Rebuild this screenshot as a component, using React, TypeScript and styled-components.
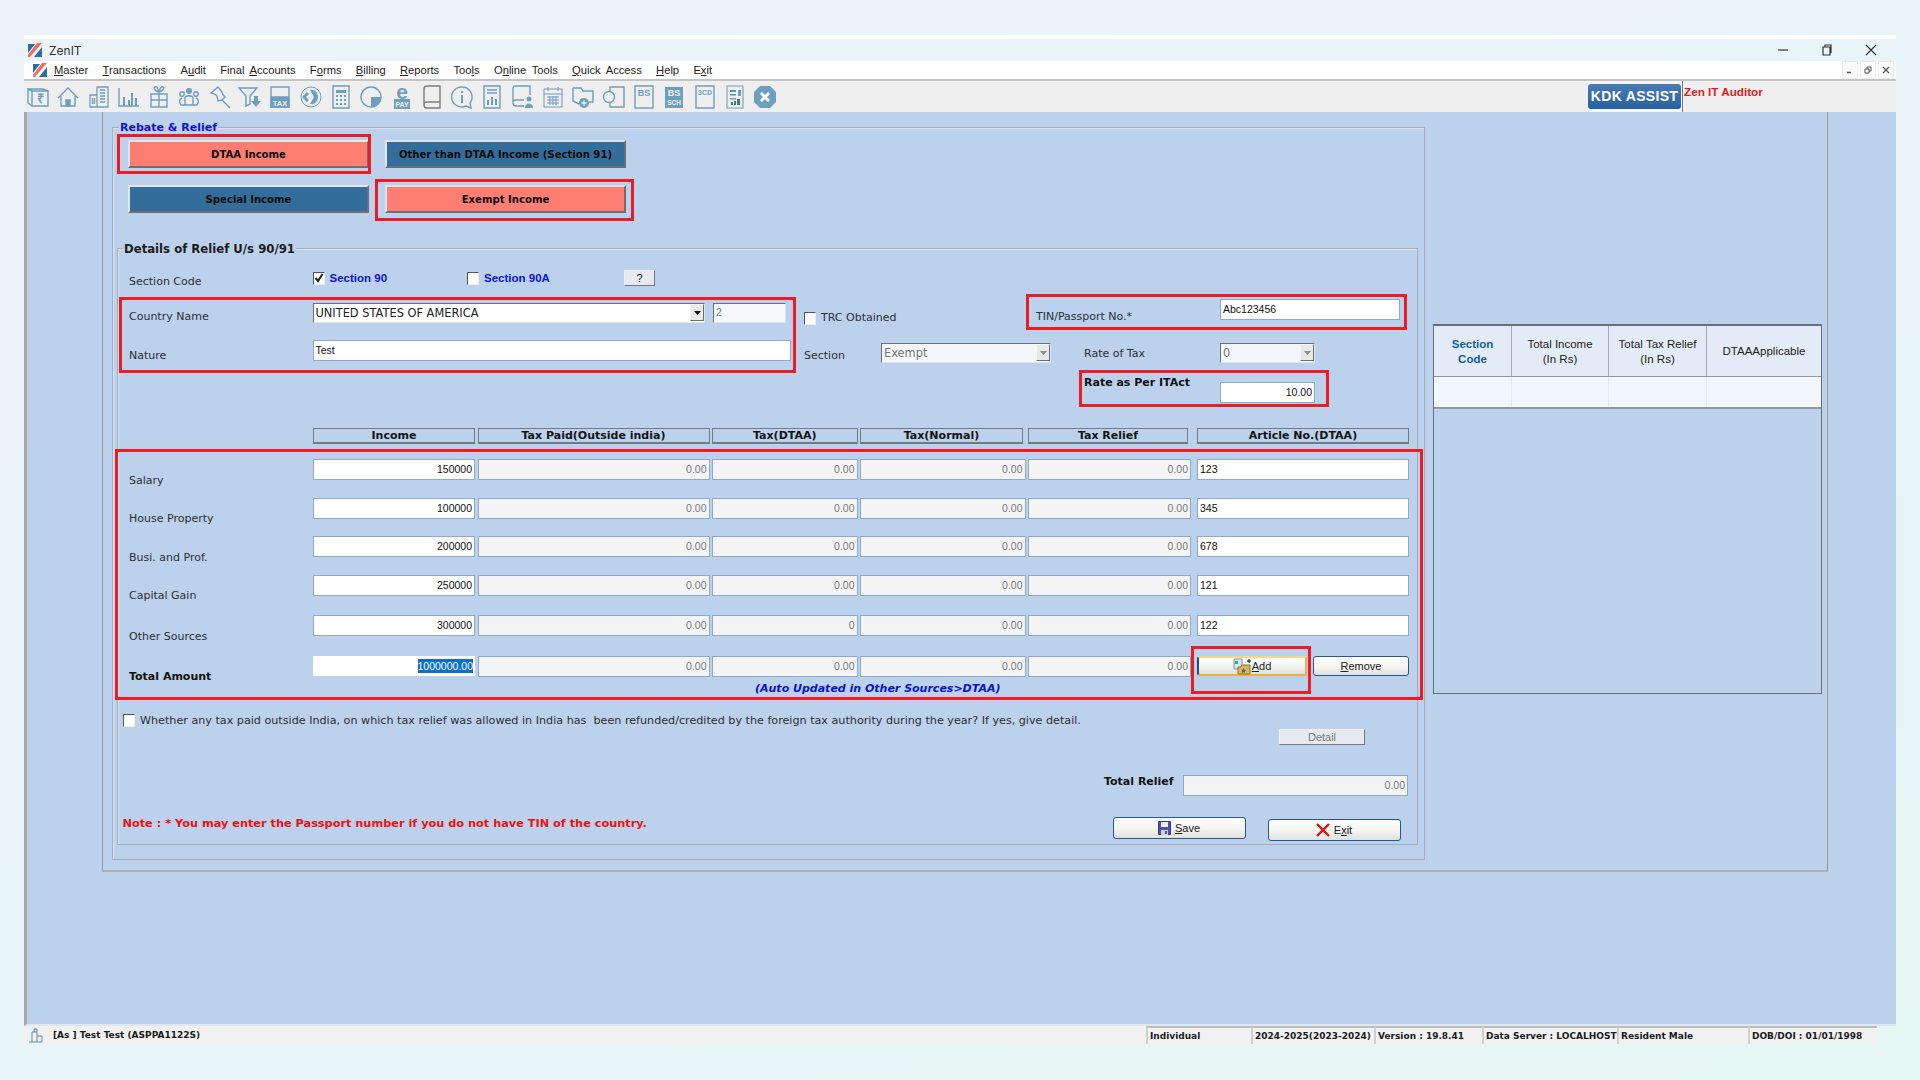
import React from 'react';
import styled, { createGlobalStyle, css } from 'styled-components';

const GlobalStyle = createGlobalStyle`
  * { box-sizing: border-box; }
  html, body { margin: 0; padding: 0; height: 1080px; overflow: hidden; }
  body {
    background: linear-gradient(165deg, #ebf3f9 0%, #e8f5f8 60%, #e6f6f3 100%);
    font-family: 'DejaVu Sans', sans-serif;
    font-size: 11px;
    color: #222;
  }
  u { text-underline-offset: 1px; }
`;

const Window = styled.div`
  margin: 35px 24px 0;
  width: 1872px;
  display: flex;
  flex-direction: column;
  border-top: 4px solid #fff;
`;

const TitleBar = styled.div`
  height: 22px;
  display: flex;
  align-items: center;
  padding-left: 3px;
  font: 12px 'Inter', 'Liberation Sans', sans-serif;
  color: #333;
`;

const TitleText = styled.span`
  margin-left: 6px;
`;

const WindowControls = styled.div`
  margin-left: auto;
  display: flex;
  gap: 32px;
  padding-right: 19px;
  align-items: center;
  color: #333;
`;

const MenuBar = styled.div`
  height: 20px;
  background: #fff;
  border-bottom: 2px solid #c4c4c4;
  display: flex;
  align-items: center;
  padding-left: 8px;
  font: 11.2px/16px 'Liberation Sans', sans-serif;
  word-spacing: 2.5px;
  color: #222;
`;

const MenuItems = styled.div`
  margin-left: 6px;
  display: flex;
  gap: 14.3px;
`;

const MdiControls = styled.div`
  margin-left: auto;
  display: flex;
  gap: 2px;
  padding-right: 2px;
  align-items: center;
`;

const MdiButton = styled.span`
  width: 16px;
  height: 18px;
  background: #fbfbfb;
  border: 1px solid #eaeaea;
  display: flex;
  align-items: center;
  justify-content: center;
  color: #555;
`;

const Toolbar = styled.div`
  height: 31px;
  background: #efefef;
  display: flex;
  align-items: center;
  padding-left: 2px;
`;

const ToolIcons = styled.div`
  display: flex;
  gap: 6.3px;
  color: #6f9fbe;
`;

const ToolSvg = styled.svg<{ $gray?: boolean }>`
  width: 24px;
  height: 24px;
  fill: none;
  overflow: visible;
  stroke: ${(p) => (p.$gray ? '#7d7d7d' : 'currentColor')};
  stroke-width: 1.4;
  flex: none;
`;

const ToolbarRight = styled.div`
  margin-left: auto;
  width: 308px;
  height: 31px;
  display: flex;
`;

const AssistButton = styled.div`
  width: 95px;
  height: 31px;
  padding: 3px 1px 3px 0;
  border-right: 1px solid #777;
  background: #f4f4f4;
`;

const AssistInner = styled.div`
  height: 25px;
  border-radius: 3px;
  background: linear-gradient(#4a7cb4, #27609f);
  color: #fff;
  font: bold 14px/25px 'Liberation Sans', sans-serif;
  text-align: center;
  letter-spacing: 0.3px;
`;

const AuditorName = styled.div`
  margin-left: 1px;
  padding-top: 4px;
  color: #e01b24;
  font: bold 11.7px 'Liberation Sans', sans-serif;
`;

const Main = styled.div`
  height: 914px;
  background: #bcd1ec;
  border-left: 3px solid #a9a9a9;
  border-bottom: 2px solid #dfe8f2;
  padding-left: 75px;
`;

const MdiForm = styled.div`
  width: 1726px;
  height: 760px;
  border: 1px solid #8e98a4;
  border-top: none;
  border-bottom: 2px solid #a8b2bf;
  padding: 15px 0 0 9px;
  display: flex;
  align-items: flex-start;
`;

const groupBox = css`
  border: 1px solid #a4adb9;
  box-shadow: inset 1px 1px 0 #d9e3f0;
`;

const RebateGroup = styled.div`
  ${groupBox}
  width: 1313px;
  height: 733px;
  padding: 1px 0 0 1px;
  flex: none;
`;

const DetailsGroup = styled.div`
  ${groupBox}
  width: 1301px;
  height: 597px;
  margin: 35px 0 0 3px;
  padding: 1px 0 0 11px;
`;

const GroupTitle = styled.div<{ $blue?: boolean }>`
  width: fit-content;
  height: 14px;
  margin: -8px 0 0 ${(p) => (p.$blue ? '5px' : '-6px')};
  padding: 0 1px;
  background: #bcd1ec;
  color: ${(p) => (p.$blue ? '#0c13cc' : '#1c1c1c')};
  font: bold ${(p) => (p.$blue ? '11px' : '11.7px')}/14px 'DejaVu Sans', sans-serif;
`;

const IncomeGrid = styled.div`
  margin: 5px 0 0 14px;
  display: grid;
  grid-template-columns: 241px 241px;
  column-gap: 16px;
  row-gap: 17px;
  width: fit-content;
`;

const IncomeButton = styled.div<{ $active?: boolean }>`
  height: 28px;
  background: ${(p) => (p.$active ? '#fe7e72' : '#336e9b')};
  border: 2px solid;
  border-color: #e3e5e8 #6c6f73 #6c6f73 #e3e5e8;
  color: #0b0b0b;
  font: bold 10.1px/25px 'DejaVu Sans', sans-serif;
  text-align: center;
`;

const Ring = styled.div<{ $t: number; $r: number; $b: number; $l: number }>`
  position: relative;
  &::after {
    content: '';
    position: absolute;
    top: ${(p) => p.$t}px;
    right: ${(p) => p.$r}px;
    bottom: ${(p) => p.$b}px;
    left: ${(p) => p.$l}px;
    border: 3px solid #ed1c24;
    pointer-events: none;
  }
`;

const Label = styled.div<{ $drop?: number; $w?: number; $bold?: boolean; $left?: number }>`
  flex: none;
  width: ${(p) => (p.$w ? `${p.$w}px` : 'auto')};
  margin-top: ${(p) => p.$drop ?? 0}px;
  margin-left: ${(p) => p.$left ?? 0}px;
  line-height: 14px;
  white-space: nowrap;
  color: ${(p) => (p.$bold ? '#111' : '#2b2f36')};
  font-weight: ${(p) => (p.$bold ? 700 : 400)};
`;

const FormRow = styled.div<{ $top?: number; $left?: number }>`
  display: flex;
  align-items: flex-start;
  margin-top: ${(p) => p.$top ?? 0}px;
  margin-left: ${(p) => p.$left ?? 0}px;
`;

const CheckOption = styled.div<{ $w?: number; $drop?: number }>`
  flex: none;
  display: flex;
  align-items: center;
  gap: 5px;
  height: 12px;
  width: ${(p) => (p.$w ? `${p.$w}px` : 'auto')};
  margin-top: ${(p) => p.$drop ?? 0}px;
`;

const CheckBox = styled.span`
  flex: none;
  width: 12px;
  height: 13px;
  background: #fff;
  border: 1px solid;
  border-color: #555 #e8eef6 #e8eef6 #555;
  display: flex;
  align-items: center;
  justify-content: center;
`;

const CheckTitle = styled.span`
  color: #0c13cc;
  font-weight: 700;
  font-family: 'Liberation Sans', sans-serif;
  font-size: 11.5px;
  white-space: nowrap;
`;

const SmallButton = styled.div<{ $disabled?: boolean }>`
  height: 16px;
  background: #e6eaf0;
  border: 1px solid;
  border-color: #eef1f5 #727982 #727982 #eef1f5;
  text-align: center;
  font: 11px/14px 'Liberation Sans', sans-serif;
  color: ${(p) => (p.$disabled ? '#777' : '#111')};
`;

const HelpButton = styled(SmallButton)`
  width: 31px;
`;

const DetailButton = styled(SmallButton)`
  width: 86px;
  margin: 2px 0 0 1150px;
`;

const MidForm = styled.div`
  display: flex;
  margin-top: 10px;
  align-items: flex-start;
`;

const fieldBase = css`
  flex: none;
  height: 21px;
  border: 1px solid #8eaaca;
  font: 10.5px/18px 'Liberation Sans', sans-serif;
  padding: 0 2px;
  white-space: nowrap;
  overflow: hidden;
`;

const Field = styled.div<{ $w?: number; $right?: boolean; $drop?: number }>`
  ${fieldBase}
  background: #fff;
  color: #111;
  width: ${(p) => (p.$w ? `${p.$w}px` : 'auto')};
  margin-top: ${(p) => p.$drop ?? 0}px;
  text-align: ${(p) => (p.$right ? 'right' : 'left')};
`;

const ReadField = styled.div<{ $w?: number }>`
  ${fieldBase}
  background: #f4f4f4;
  color: #7b7b7b;
  text-align: right;
  width: ${(p) => (p.$w ? `${p.$w}px` : 'auto')};
`;

const ComboBox = styled.div<{ $w: number; $muted?: boolean }>`
  flex: none;
  display: flex;
  justify-content: space-between;
  width: ${(p) => p.$w}px;
  height: 20px;
  background: ${(p) => (p.$muted ? '#f3f6fb' : '#fff')};
  border: 1px solid;
  border-color: #6c6f73 #dce6f2 #dce6f2 #6c6f73;
  padding: 0 0 1px 2px;
  color: ${(p) => (p.$muted ? '#777' : '#222')};
  font: 11.4px/18px 'DejaVu Sans', sans-serif;
`;

const ComboArrow = styled.span<{ $muted?: boolean }>`
  width: 14px;
  height: 17px;
  background: #e9e9e9;
  border: 1px solid;
  border-color: #f7f7f7 #6c6f73 #6c6f73 #f7f7f7;
  display: flex;
  align-items: center;
  justify-content: center;
  color: ${(p) => (p.$muted ? '#8b8b8b' : '#111')};
`;

const NumberBox = styled.div`
  flex: none;
  width: 73px;
  height: 20px;
  margin-left: 8px;
  background: #f6f8fb;
  border: 1px solid;
  border-color: #6c6f73 #dce6f2 #dce6f2 #6c6f73;
  padding-left: 2px;
  color: #7b7b7b;
  font: 10.5px/16px 'Liberation Sans', sans-serif;
`;

const CountryColumn = styled(Ring)`
  flex: none;
  width: 662px;
  padding-top: 4px;
`;

const SideColumn = styled.div`
  margin-left: 13px;
`;

const TinGroup = styled(Ring)`
  display: flex;
  width: 364px;
  height: 20px;
`;

const RateGroup = styled(Ring)`
  display: flex;
  width: 231px;
  height: 27px;
  margin-left: 280px;
  margin-top: 13px;
`;

const tableColumns = css`
  display: grid;
  grid-template-columns: 181.5px 162px 232px 145.5px 165.5px 166.5px 212px;
  column-gap: 2.5px;
`;

const HeaderRow = styled.div`
  ${tableColumns}
  margin-top: 25px;
  height: 16px;
`;

const HeaderCell = styled.div<{ $w?: number }>`
  height: 16px;
  width: ${(p) => (p.$w ? `${p.$w}px` : 'auto')};
  border: 1px solid #717c89;
  border-bottom-width: 2px;
  text-align: center;
  color: #141414;
  font: bold 11px/13px 'DejaVu Sans', sans-serif;
`;

const TableBody = styled(Ring)`
  margin-top: 15px;
  width: 1280px;
`;

const IncomeRow = styled.div<{ $top: number }>`
  ${tableColumns}
  height: 21px;
  margin-top: ${(p) => p.$top}px;
`;

const TotalField = styled.div`
  height: 20px;
  background: #fff;
  text-align: right;
  padding: 3px 2px 0 0;
  font: 10.5px/14px 'Liberation Sans', sans-serif;
`;

const Selected = styled.span`
  display: inline-block;
  background: #0a6fd1;
  color: #fff;
`;

const RowActions = styled.div`
  display: flex;
  justify-content: space-between;
`;

const AddRing = styled(Ring)`
  width: 110px;
`;

const RaisedButton = styled.div<{ $w?: number; $h?: number; $drop?: number; $focus?: boolean; $tight?: boolean }>`
  flex: none;
  width: ${(p) => (p.$w ? `${p.$w}px` : '100%')};
  height: ${(p) => p.$h ?? 20}px;
  margin-top: ${(p) => p.$drop ?? 0}px;
  background: linear-gradient(#ffffff, #f3f3f0 55%, #dfe1e0);
  border: ${(p) => (p.$focus ? '2px solid #f0b040' : '1px solid #25598a')};
  border-top-color: ${(p) => (p.$focus ? '#f7d78c' : '#25598a')};
  border-left-color: ${(p) => (p.$focus ? '#1f4f7d' : '#25598a')};
  border-radius: 3px;
  display: flex;
  align-items: center;
  justify-content: center;
  gap: ${(p) => (p.$tight ? 1 : 4)}px;
  color: #222;
  font: 11px 'Liberation Sans', sans-serif;
`;

const AutoNote = styled.div`
  margin-top: 5px;
  padding-left: 626px;
  height: 14px;
  color: #0c13cc;
  font: italic bold 11px/14px 'DejaVu Sans', sans-serif;
`;

const RefundRow = styled(FormRow)`
  margin-left: -6px;
  margin-top: 18px;
`;

const RefundCheck = styled(CheckOption)`
  gap: 5px;
  height: 13px;
`;

const RefundText = styled.span`
  white-space: pre;
  color: #2b2f36;
  font-size: 11.17px;
`;

const NoteText = styled.div`
  flex: none;
  width: 990px;
  margin: 0 0 0 -6.5px;
  color: #ee1111;
  font: bold 11.3px/14px 'DejaVu Sans', sans-serif;
`;

const ExitButtonWrap = styled.div`
  margin-left: 22px;
`;

const ReliefGrid = styled.div`
  width: 389px;
  height: 370px;
  margin: 197px 0 0 8px;
  flex: none;
  border: 1px solid #67717c;
  border-top-width: 2px;
`;

const GridHead = styled.div`
  display: grid;
  grid-template-columns: 77px 97px 98px 1fr;
  height: 51px;
  background: #e3ecf6;
  border-bottom: 1px solid #8f99a5;
`;

const GridHeadCell = styled.div<{ $accent?: boolean }>`
  display: flex;
  align-items: center;
  justify-content: center;
  text-align: center;
  padding-top: 1px;
  border-left: 1px solid #a4adb9;
  &:first-child {
    border-left: none;
  }
  color: ${(p) => (p.$accent ? '#155c9c' : '#222')};
  font: ${(p) => (p.$accent ? 700 : 400)} 11.5px/15px 'Liberation Sans', sans-serif;
`;

const GridRow = styled.div`
  display: grid;
  grid-template-columns: 77px 97px 98px 1fr;
  height: 32px;
  background: #f2f7fd;
  border-bottom: 2px solid #8f99a5;
`;

const GridCell = styled.div`
  border-left: 1px solid #e5ebf3;
  &:first-child {
    border-left: none;
  }
`;

const StatusBar = styled.div`
  width: 1853px;
  height: 18px;
  display: flex;
  background: #f1f1f1;
  font: bold 9px/16px 'DejaVu Sans', sans-serif;
  color: #1b1b1b;
`;

const StatusCell = styled.div<{ $w: number }>`
  flex: none;
  width: ${(p) => p.$w}px;
  height: 18px;
  border-top: 2px solid #bdbdbd;
  border-left: 2px solid #cfcfcf;
  padding-left: 2px;
  white-space: nowrap;
  overflow: hidden;
`;

const StatusLead = styled.div`
  flex: none;
  width: 1122px;
  display: flex;
  align-items: center;
  gap: 9px;
  padding-left: 4px;
  white-space: nowrap;
`;

const Logo = () => (
  <svg width="16" height="16" viewBox="0 0 16 16">
    <path d="M1 2h7L1 11z" fill="#2a6ea3" />
    <path d="M10 1h5L3 15H1v-2z" fill="#f0705f" />
    <path d="M15 5v10H7z" fill="#2a6ea3" />
  </svg>
);

const Tool = ({ children, gray }: { children: React.ReactNode; gray?: boolean }) => (
  <ToolSvg viewBox="0 0 24 24" $gray={gray}>
    {children}
  </ToolSvg>
);

const Tiny = ({ x, y, size, children, fill }: { x: number; y: number; size: number; children: string; fill?: string }) => (
  <text
    x={x}
    y={y}
    fontSize={size}
    fontFamily="'Liberation Sans', sans-serif"
    fontWeight={700}
    textAnchor="middle"
    fill={fill ?? 'currentColor'}
    stroke="none"
  >
    {children}
  </text>
);

const toolIcons: React.ReactNode[] = [
  <Tool key="note">
    <path d="M2 4l4 2v15l-4-3zM2 4h15l5 2M6 6h16v15H6" />
    <Tiny x={14} y={18} size={13}>₹</Tiny>
  </Tool>,
  <Tool key="home">
    <path d="M2 13 12 3l10 10M5 11v10h14V11" />
    <path d="M10 21v-6h4v6z" fill="currentColor" />
  </Tool>,
  <Tool key="building">
    <path d="M10 22V2h11v20zM10 10H3v12h7M13 5h5M13 8h5M13 11h5M13 14h5M13 17h5M5.500 13v6M7.500 13v6" strokeWidth="1.300" />
  </Tool>,
  <Tool key="chart">
    <path d="M2 3v18h20" />
    <path d="M6 12h2v9H6zM11 15h2v6h-2zM14 8h2v13h-2zM18 13h2v8h-2z" fill="currentColor" stroke="none" />
  </Tool>,
  <Tool key="gift">
    <path d="M4 9h16v13H4zM4 15h16M12 9v13M8 2c-2 1 0 4 4 5 4-1 6-4 4-5-2-1-3 2-4 5-1-3-2-6-4-5z" />
  </Tool>,
  <Tool key="people">
    <circle cx="12" cy="6" r="3" fill="currentColor" stroke="none" />
    <circle cx="5" cy="9" r="2.200" />
    <circle cx="19" cy="9" r="2.200" />
    <path d="M8 20V13c0-3 8-3 8 0v7zM8 20H4c-2-2-2-6 1-7M16 20h4c2-2 2-6-1-7" />
  </Tool>,
  <Tool key="pin">
    <path d="M10 2 3 8c3 1 5 1 6 3l1 5 4-1 3-3c-2-2-3-3-3-5zM14 15l8 8" />
  </Tool>,
  <Tool key="filter">
    <path d="M1 3h18l-7 8v8l-4 2V11z" />
    <path d="M16 11h4v5h3l-5 6-5-6h3z" fill="currentColor" stroke="none" />
  </Tool>,
  <Tool key="tax">
    <path d="M3 2h18v20H3z" />
    <path d="M3 12h18v10H3z" fill="currentColor" />
    <Tiny x={12} y={20.500} size={7.500} fill="#efefef">TAX</Tiny>
  </Tool>,
  <Tool key="disc">
    <circle cx="12" cy="12" r="10" strokeWidth="1" />
    <path d="M3 12l5-5 2 2-3 3 3 3-2 2zM11 5c5-1 8 3 8 7s-3 8-8 7l4-7z" fill="currentColor" stroke="none" />
  </Tool>,
  <Tool key="calc">
    <path d="M4 1h16v22H4z" />
    <path d="M7 5h10v3H7zM7 10h2v2H7zM11 10h2v2h-2zM15 10h2v2h-2zM7 14h2v2H7zM11 14h2v2h-2zM15 14h2v2h-2zM7 18h2v2H7zM11 18h2v2h-2zM15 18h2v2h-2z" fill="currentColor" stroke="none" />
  </Tool>,
  <Tool key="pie">
    <circle cx="12" cy="12" r="10" />
    <path d="M12 12h10c0 6-4 10-10 10z" fill="currentColor" stroke="none" />
  </Tool>,
  <Tool key="epay">
    <Tiny x={12} y={13.500} size={21}>e</Tiny>
    <path d="M4 14h16v10H4z" fill="currentColor" stroke="none" />
    <Tiny x={12} y={22} size={7} fill="#efefef">PAY</Tiny>
  </Tool>,
  <Tool key="book" gray>
    <path d="M4 4c0-2 1-3 3-3h13v22H7c-2 0-3-1-3-3zM4 19c0-1 1-2 3-2h13" />
  </Tool>,
  <Tool key="info">
    <path d="M12 2a10 10 0 1 0 4 19l5 2-1-5A10 10 0 0 0 12 2z" />
    <path d="M11 10h2v8h-2zM11 6h2v2h-2z" fill="currentColor" stroke="none" />
  </Tool>,
  <Tool key="report">
    <path d="M4 1h16v22H4zM7 5h10M7 8h10" />
    <path d="M7 15h2v5H7zM11 12h2v8h-2zM15 14h2v6h-2z" fill="currentColor" stroke="none" />
  </Tool>,
  <Tool key="book-user">
    <path d="M13 21H5c-2 0-3-1-3-3V3c0-1 1-2 2-2h15v9M2 17c0-1 1-2 3-2h8" />
    <circle cx="18" cy="14" r="2.500" fill="currentColor" stroke="none" />
    <path d="M14 23c0-6 8-6 8 0z" fill="currentColor" stroke="none" />
  </Tool>,
  <Tool key="calendar">
    <path d="M3 4h18v18H3zM3 9h18M7 2v4M17 2v4M6 12h12M6 15h12M6 18h12M9 11v9M12 11v9M15 11v9" strokeWidth="1.100" />
  </Tool>,
  <Tool key="folder">
    <path d="M2 3h8l2 3h10v11h-4M2 3v13l6 3" />
    <circle cx="13" cy="18" r="5" fill="currentColor" stroke="none" />
    <path d="M10.500 18h5M13 15.500v5" stroke="#efefef" />
  </Tool>,
  <Tool key="copy">
    <path d="M8 2h14v20H8z" />
    <circle cx="7" cy="12" r="5.500" fill="#efefef" />
  </Tool>,
  <Tool key="bs">
    <path d="M3 1h18v22H3z" />
    <Tiny x={12} y={11} size={9}>BS</Tiny>
  </Tool>,
  <Tool key="bs-sch">
    <path d="M3 2h18v21H3z" fill="currentColor" stroke="none" />
    <Tiny x={12} y={11} size={9} fill="#efefef">BS</Tiny>
    <Tiny x={12} y={20} size={6.500} fill="#efefef">SCH</Tiny>
  </Tool>,
  <Tool key="3cd">
    <path d="M3 1h18v22H3z" />
    <Tiny x={12} y={10} size={7}>3CD</Tiny>
  </Tool>,
  <Tool key="dash">
    <path d="M4 1h16v22H4z" strokeWidth="1.100" />
    <path d="M7 5h6v2H7zM7 9h6v1.500H7z" fill="#4fa18f" stroke="none" />
    <path d="M7 13h6v1.500H7zM15 5h3v6h-3z" fill="currentColor" stroke="none" />
    <path d="M8 20v-3h2v3zM11 20v-4h2v4zM14 20v-6h3v6z" fill="#3d7f73" stroke="none" />
  </Tool>,
  <Tool key="close">
    <path d="M7 1h10l6 6v10l-6 6H7l-6-6V7z" fill="currentColor" stroke="none" />
    <path d="M8 8l8 8M16 8l-8 8" stroke="#fff" strokeWidth="2.800" />
  </Tool>,
];

const DownTriangle = () => (
  <svg width="7" height="4" viewBox="0 0 7 4">
    <path d="M0 0h7L3.500 4z" fill="currentColor" />
  </svg>
);

const Tick = () => (
  <svg width="10" height="10" viewBox="0 0 10 10">
    <path d="M1.500 5l2.500 3 4.500-7" fill="none" stroke="#222" strokeWidth="2" />
  </svg>
);

const AddIcon = () => (
  <svg width="18" height="17" viewBox="0 0 18 17">
    <path d="M1 1h8v10H1z" fill="#dbe7f3" stroke="#7d93ab" />
    <path d="M2 3h3v3H2z" fill="#46a65a" />
    <path d="M5 9h3l1-2h8v9H5z" fill="#d8b45a" stroke="#8f7330" />
    <path d="M10.500 10l.8 1.700 1.700.3-1.300 1.200.3 1.800-1.500-.9-1.500.9.300-1.800L8.500 12l1.700-.3z" fill="#55508f" />
    <path d="M14 3h4M16 1v4" stroke="#111" />
  </svg>
);

const SaveIcon = () => (
  <svg width="13" height="14" viewBox="0 0 13 14">
    <path d="M.5.500h12v13H.5z" fill="#4d55ad" stroke="#343a86" />
    <path d="M3 1h7v5H3z" fill="#f2f2f6" />
    <path d="M3 9h7v5H3z" fill="#cdd0dd" />
    <path d="M7 10h2v3H7z" fill="#4d55ad" />
  </svg>
);

const ExitIcon = () => (
  <svg width="14" height="14" viewBox="0 0 14 14">
    <path d="M1 1l12 12M13 1 1 13" stroke="#e01212" strokeWidth="2.400" fill="none" />
  </svg>
);

const menu: [string, string, string][] = [
  ['', 'M', 'aster'],
  ['', 'T', 'ransactions'],
  ['A', 'u', 'dit'],
  ['Final ', 'A', 'ccounts'],
  ['F', 'o', 'rms'],
  ['', 'B', 'illing'],
  ['', 'R', 'eports'],
  ['Too', 'l', 's'],
  ['O', 'n', 'line Tools'],
  ['', 'Q', 'uick Access'],
  ['', 'H', 'elp'],
  ['E', 'x', 'it'],
];

const incomeRows = [
  { label: 'Salary', income: '150000', dtaa: '0.00', article: '123', top: 0, drop: 15 },
  { label: 'House Property', income: '100000', dtaa: '0.00', article: '345', top: 18, drop: 14 },
  { label: 'Busi. and Prof.', income: '200000', dtaa: '0.00', article: '678', top: 17, drop: 15 },
  { label: 'Capital Gain', income: '250000', dtaa: '0.00', article: '121', top: 18, drop: 14 },
  { label: 'Other Sources', income: '300000', dtaa: '0', article: '122', top: 19, drop: 15 },
];

const headers: { title: string; w?: number }[] = [
  { title: 'Income' },
  { title: 'Tax Paid(Outside india)' },
  { title: 'Tax(DTAA)' },
  { title: 'Tax(Normal)', w: 163 },
  { title: 'Tax Relief', w: 160 },
  { title: 'Article No.(DTAA)' },
];

const statusCells = [
  { text: 'Individual', w: 105 },
  { text: '2024-2025(2023-2024)', w: 123 },
  { text: 'Version : 19.8.41', w: 108 },
  { text: 'Data Server : LOCALHOST', w: 135 },
  { text: 'Resident Male', w: 131 },
  { text: 'DOB/DOI : 01/01/1998', w: 129 },
];

const App = (): JSX.Element => {
  return (
    <>
      <GlobalStyle />
      <Window>
        <TitleBar>
          <Logo />
          <TitleText>ZenIT</TitleText>
          <WindowControls>
            <svg width="12" height="12" viewBox="0 0 12 12">
              <path d="M1 6h10" stroke="#333" strokeWidth="1.200" />
            </svg>
            <svg width="12" height="12" viewBox="0 0 12 12" fill="none" stroke="#333" strokeWidth="1.200">
              <path d="M2 3h7v8H2zM4 3V1h6v8" />
            </svg>
            <svg width="12" height="12" viewBox="0 0 12 12">
              <path d="M1 1l10 10M11 1 1 11" stroke="#333" strokeWidth="1.200" />
            </svg>
          </WindowControls>
        </TitleBar>

        <MenuBar>
          <Logo />
          <MenuItems>
            {menu.map(([before, key, after]) => (
              <span key={before + key + after}>
                {before}
                <u>{key}</u>
                {after}
              </span>
            ))}
          </MenuItems>
          <MdiControls>
            <MdiButton>
              <svg width="8" height="8" viewBox="0 0 8 8">
                <path d="M1 6.500h4" stroke="#555" strokeWidth="1.500" />
              </svg>
            </MdiButton>
            <MdiButton>
              <svg width="8" height="8" viewBox="0 0 8 8" fill="none" stroke="#555">
                <path d="M1 3h4v4H1zM3 3V1h4v4H5" />
              </svg>
            </MdiButton>
            <MdiButton>
              <svg width="8" height="8" viewBox="0 0 8 8">
                <path d="M1 1l6 6M7 1 1 7" stroke="#555" strokeWidth="1.200" />
              </svg>
            </MdiButton>
          </MdiControls>
        </MenuBar>

        <Toolbar>
          <ToolIcons>{toolIcons}</ToolIcons>
          <ToolbarRight>
            <AssistButton>
              <AssistInner>KDK ASSIST</AssistInner>
            </AssistButton>
            <AuditorName>Zen IT Auditor</AuditorName>
          </ToolbarRight>
        </Toolbar>

        <Main>
          <MdiForm>
            <RebateGroup>
              <GroupTitle $blue>Rebate &amp; Relief</GroupTitle>
              <IncomeGrid>
                <Ring $t={-6} $r={-2} $b={-6} $l={-11}>
                  <IncomeButton $active>DTAA Income</IncomeButton>
                </Ring>
                <IncomeButton>Other than DTAA Income (Section 91)</IncomeButton>
                <IncomeButton>Special Income</IncomeButton>
                <Ring $t={-6} $r={-8} $b={-8} $l={-10}>
                  <IncomeButton $active>Exempt Income</IncomeButton>
                </Ring>
              </IncomeGrid>

              <DetailsGroup>
                <GroupTitle>Details of Relief U/s 90/91</GroupTitle>

                <FormRow $top={14}>
                  <Label $w={183.5} $drop={5}>Section Code</Label>
                  <CheckOption $w={154.5} $drop={2}>
                    <CheckBox><Tick /></CheckBox>
                    <CheckTitle>Section 90</CheckTitle>
                  </CheckOption>
                  <CheckOption $w={157} $drop={2}>
                    <CheckBox />
                    <CheckTitle>Section 90A</CheckTitle>
                  </CheckOption>
                  <HelpButton>?</HelpButton>
                </FormRow>

                <MidForm>
                  <CountryColumn $t={-2} $r={-5} $b={-10} $l={-10}>
                    <FormRow>
                      <Label $w={183.5} $drop={7}>Country Name</Label>
                      <ComboBox $w={392.5}>
                        UNITED STATES OF AMERICA
                        <ComboArrow><DownTriangle /></ComboArrow>
                      </ComboBox>
                      <NumberBox>2</NumberBox>
                    </FormRow>
                    <FormRow $top={16}>
                      <Label $w={183.5} $drop={9}>Nature</Label>
                      <Field $w={478.5}>Test</Field>
                    </FormRow>
                  </CountryColumn>

                  <SideColumn>
                    <FormRow>
                      <CheckOption $w={232} $drop={13}>
                        <CheckBox />
                        <Label>TRC Obtained</Label>
                      </CheckOption>
                      <TinGroup $t={-5} $r={-7} $b={-11} $l={-10}>
                        <Label $w={184} $drop={11}>TIN/Passport No.*</Label>
                        <Field $w={180}>Abc123456</Field>
                      </TinGroup>
                    </FormRow>
                    <FormRow $top={19}>
                      <Label $w={77} $drop={6}>Section</Label>
                      <ComboBox $w={170} $muted>
                        Exempt
                        <ComboArrow $muted><DownTriangle /></ComboArrow>
                      </ComboBox>
                      <Label $w={136} $drop={4} $left={33}>Rate of Tax</Label>
                      <ComboBox $w={95} $muted>
                        0
                        <ComboArrow $muted><DownTriangle /></ComboArrow>
                      </ComboBox>
                    </FormRow>
                    <RateGroup $t={-6} $r={-14} $b={-4} $l={-5}>
                      <Label $w={136} $bold>Rate as Per ITAct</Label>
                      <Field $w={95} $right $drop={6}>10.00</Field>
                    </RateGroup>
                  </SideColumn>
                </MidForm>

                <HeaderRow>
                  <span />
                  {headers.map((h) => (
                    <HeaderCell key={h.title} $w={h.w}>{h.title}</HeaderCell>
                  ))}
                </HeaderRow>

                <TableBody $t={-10} $r={-14} $b={-4} $l={-14}>
                  {incomeRows.map((row) => (
                    <IncomeRow key={row.label} $top={row.top}>
                      <Label $drop={row.drop}>{row.label}</Label>
                      <Field $right>{row.income}</Field>
                      <ReadField>0.00</ReadField>
                      <ReadField>{row.dtaa}</ReadField>
                      <ReadField>0.00</ReadField>
                      <ReadField $w={163}>0.00</ReadField>
                      <Field>{row.article}</Field>
                    </IncomeRow>
                  ))}
                  <IncomeRow $top={20}>
                    <Label $drop={14} $bold>Total Amount</Label>
                    <TotalField><Selected>1000000.00</Selected></TotalField>
                    <ReadField>0.00</ReadField>
                    <ReadField>0.00</ReadField>
                    <ReadField>0.00</ReadField>
                    <ReadField $w={163}>0.00</ReadField>
                    <RowActions>
                      <AddRing $t={-10} $r={-4} $b={-10} $l={-6}>
                        <RaisedButton $focus $tight>
                          <AddIcon />
                          <span><u>A</u>dd</span>
                        </RaisedButton>
                      </AddRing>
                      <RaisedButton $w={96}><span><u>R</u>emove</span></RaisedButton>
                    </RowActions>
                  </IncomeRow>
                  <AutoNote>(Auto Updated in Other Sources&gt;DTAA)</AutoNote>
                </TableBody>

                <RefundRow>
                  <RefundCheck>
                    <CheckBox />
                    <RefundText>Whether any tax paid outside India, on which tax relief was allowed in India has  been refunded/credited by the foreign tax authority during the year? If yes, give detail.</RefundText>
                  </RefundCheck>
                </RefundRow>

                <DetailButton $disabled>Detail</DetailButton>

                <FormRow $top={30} $left={975}>
                  <Label $w={79} $bold>Total Relief</Label>
                  <ReadField $w={225}>0.00</ReadField>
                </FormRow>

                <FormRow $top={21}>
                  <NoteText>Note : * You may enter the Passport number if you do not have TIN of the country.</NoteText>
                  <RaisedButton $w={133} $h={22}>
                    <SaveIcon />
                    <span><u>S</u>ave</span>
                  </RaisedButton>
                  <ExitButtonWrap>
                    <RaisedButton $w={133} $h={22} $drop={2}>
                      <ExitIcon />
                      <span>E<u>x</u>it</span>
                    </RaisedButton>
                  </ExitButtonWrap>
                </FormRow>
              </DetailsGroup>
            </RebateGroup>

            <ReliefGrid>
              <GridHead>
                <GridHeadCell $accent>Section<br />Code</GridHeadCell>
                <GridHeadCell>Total Income<br />(In Rs)</GridHeadCell>
                <GridHeadCell>Total Tax Relief<br />(In Rs)</GridHeadCell>
                <GridHeadCell>DTAAApplicable</GridHeadCell>
              </GridHead>
              <GridRow>
                <GridCell />
                <GridCell />
                <GridCell />
                <GridCell />
              </GridRow>
            </ReliefGrid>
          </MdiForm>
        </Main>

        <StatusBar>
          <StatusLead>
            <svg width="16" height="15" viewBox="0 0 16 15" fill="none" stroke="#5d8fb1">
              <path d="M4 14V4h5v10M9 8h5v6H1" />
              <path d="M6 4V1h3v3" />
            </svg>
            [As ] Test Test (ASPPA1122S)
          </StatusLead>
          {statusCells.map((cell) => (
            <StatusCell key={cell.text} $w={cell.w}>{cell.text}</StatusCell>
          ))}
        </StatusBar>
      </Window>
    </>
  );
};

export default App;
